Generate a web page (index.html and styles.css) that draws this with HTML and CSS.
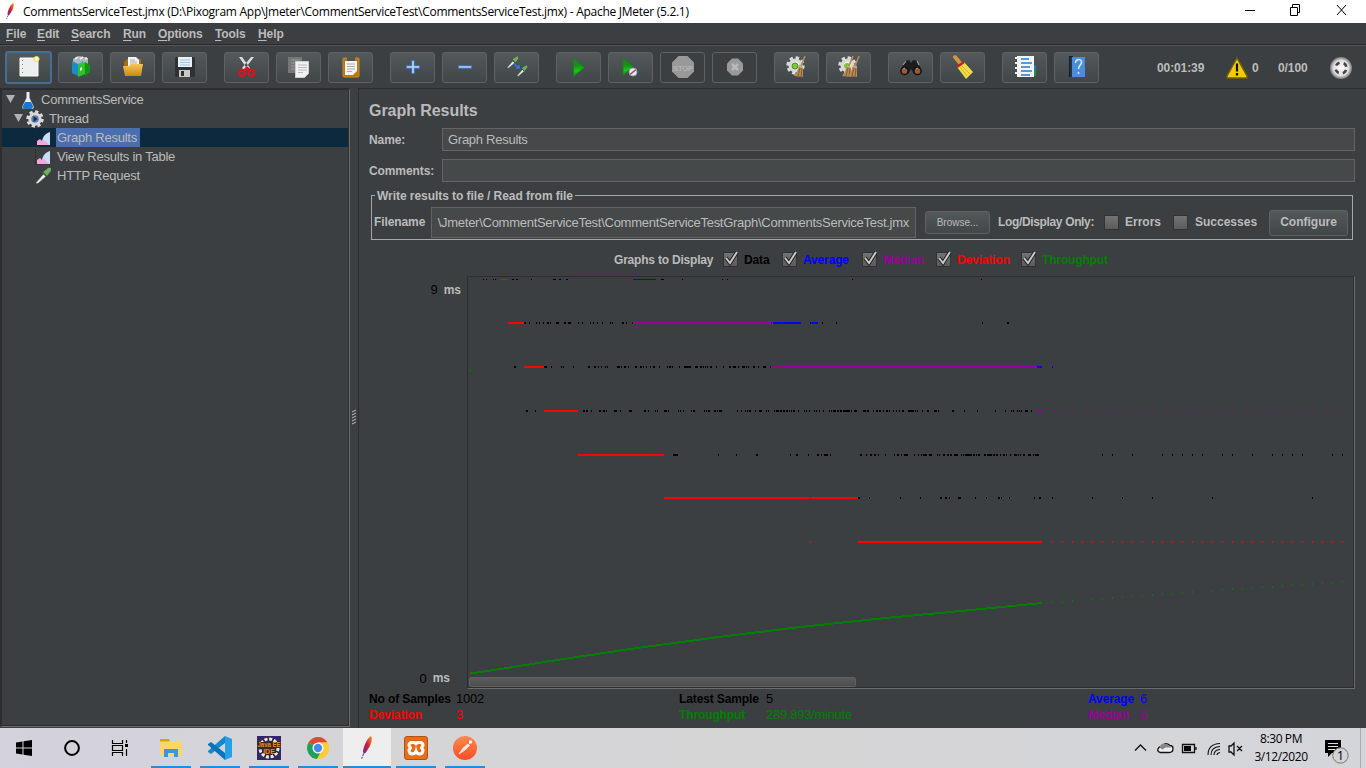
FILE: index.html
```html
<!DOCTYPE html>
<html lang="en">
<head>
<meta charset="utf-8">
<title>Apache JMeter (5.2.1)</title>
<link rel="stylesheet" href="styles.css">
</head>
<body>
<svg class="defs" width="0" height="0">
  <defs>
    <linearGradient id="feather" x1="0" y1="1" x2="1" y2="0"><stop offset="0" stop-color="#6d2a86"/><stop offset=".5" stop-color="#cf1f3d"/><stop offset="1" stop-color="#f79a1e"/></linearGradient>
    <linearGradient id="green" x1="0" y1="0" x2="0" y2="1"><stop offset="0" stop-color="#128a18"/><stop offset=".4" stop-color="#159218"/><stop offset=".7" stop-color="#19c615"/><stop offset="1" stop-color="#0a8a0c"/></linearGradient>
    <linearGradient id="folder" x1="0" y1="0" x2="0" y2="1"><stop offset="0" stop-color="#f5c85c"/><stop offset="1" stop-color="#c98a10"/></linearGradient>
    <linearGradient id="postman" x1="0" y1="0" x2="0" y2="1"><stop offset="0" stop-color="#ff8a50"/><stop offset="1" stop-color="#ff4c24"/></linearGradient>
    <radialGradient id="ball"><stop offset="0" stop-color="#fff"/><stop offset=".7" stop-color="#ddd"/><stop offset="1" stop-color="#777"/></radialGradient>
    <symbol id="quill" viewBox="0 0 12 24"><path d="M10.500 0c2 3 0 9-3 13l-2.500 4-2 1-.5-3C3.500 9 7 2 10.500 0z" fill="url(#feather)"/><path d="M3 18l-2 5" stroke="#6d4b92" stroke-width="1.200" stroke-dasharray="2 1"/></symbol>
    <symbol id="gear" viewBox="0 0 18 18"><circle cx="9" cy="9" r="7.400" fill="none" stroke="#ddd" stroke-width="2.600" stroke-dasharray="3.200 2.600"/><circle cx="9" cy="9" r="5.200" fill="#eee" stroke="#d8d8d8" stroke-width="3"/></symbol>
    <symbol id="broom" viewBox="0 0 12 22"><path d="M11 0L7 10" stroke="#b08a5a" stroke-width="1.600"/><path d="M5 9l4 2 0 10-9-1c3-3 4-7 5-11z" fill="#b78a58"/><path d="M6 12l-2 8M8 12l-1 9" stroke="#76502c" stroke-width=".8"/><path d="M5 10l4 2" stroke="#e4bb85"/></symbol>
    <symbol id="pipette" viewBox="0 0 18 18"><path d="M2 16l8-9 2 2L4 16z" fill="#f4f8f4" stroke="#b4bcb5" stroke-width=".7"/><path d="M9 5l4-3c2-2 4-1 4 0s0 2-1 3l-3 4z" fill="#6fb05e"/><path d="M8.500 5.500l4 4" stroke="#34602e" stroke-width="1.500"/></symbol>
    <symbol id="graph" viewBox="0 0 17 17"><path d="M1.500 1v15h15" fill="none" stroke="#252729" stroke-dasharray="1.500 1"/><path d="M8 12c1-5 4-8 8-9v13h-4z" fill="#c9ddf6"/><path d="M3 16v-4l3-2 2 2 2-1 3 3 2 2z" fill="#f3a6dc"/></symbol>
  </defs>
</svg>

<header class="titlebar">
  <svg class="title-logo" width="12" height="18"><use href="#quill" width="10" height="17"/></svg>
  <span class="title-text">CommentsServiceTest.jmx (D:\Pixogram App\Jmeter\CommentServiceTest\CommentsServiceTest.jmx) - Apache JMeter (5.2.1)</span>
  <svg class="winbuttons" width="102" height="16" fill="none" stroke="#000"><path d="M0 8.500h10M45.500 5.500h7v8h-7zM47.500 5v-2.500h7v8h-2M92 3l9 10M101 3l-9 10"/></svg>
</header>

<nav class="menubar">
  <span class="m1"><u>F</u>ile</span><span class="m2"><u>E</u>dit</span><span class="m3"><u>S</u>earch</span><span class="m4"><u>R</u>un</span><span class="m5"><u>O</u>ptions</span><span class="m6"><u>T</u>ools</span><span class="m7"><u>H</u>elp</span>
</nav>

<div class="toolbar">
  <div class="group">
    <button class="tb focus"><svg width="24" height="24"><path d="M3 3h18v18H3z" fill="#eee" stroke="#fafafa"/><path d="M5.500 5v15" stroke="#888" stroke-dasharray="1 3"/><circle cx="19.500" cy="4" r="2.600" fill="#fff9c8" stroke="#e6d95a"/></svg></button>
    <button class="tb"><svg width="24" height="24"><path d="M4 4l6-3 9 2v8H4z" fill="#aeb7b7"/><path d="M6 4l3-2M11 4l3-2M16 4l2-1" stroke="#e8eeee" stroke-width="2"/><path d="M3 6l6 3v12l-6-3z" fill="#1b8cc7"/><path d="M9 9l5-3v12l-5 3z" fill="#2fb5df"/><path d="M9 10l7-3v12l-7 3z" fill="#2fc32b"/><path d="M16 7l5 3v7l-5 4z" fill="#149412"/><path d="M11 13l2-1v3l-2 1z" fill="#eafbe8"/></svg></button>
    <button class="tb"><svg width="24" height="24"><path d="M3 7l3-3h14v12H3z" fill="#a87108"/><path d="M7 2h8l3 3v10H7z" fill="#f4f4f4"/><path d="M9 5h5M9 7h7M9 9h7" stroke="#aaa"/><path d="M2 11h6l2-2h12l-2 12H4z" fill="url(#folder)"/></svg></button>
    <button class="tb"><svg width="24" height="24"><rect x="2" y="2" width="20" height="20" rx="1.500" fill="#2f3133"/><path d="M5 2h14v10H5z" fill="#e9f1f7"/><path d="M7 5h10M7 7.500h10M7 10h10" stroke="#9bc3df"/><path d="M6 15h11v7H6z" fill="#c9c9c9"/><path d="M8 16h3v5H8z" fill="#303030"/></svg></button>
  </div>
  <div class="group">
    <button class="tb"><svg width="24" height="24"><path d="M4 2l9 13 2-2L7 2zM19 2L9 15l-2-2 9-11z" fill="#ddd"/><ellipse cx="7" cy="18" rx="2.800" ry="3" fill="none" stroke="#d5151d" stroke-width="2.600"/><ellipse cx="16.500" cy="18" rx="2.800" ry="3" fill="none" stroke="#d5151d" stroke-width="2.600"/><path d="M9 15.500l3-2.500 3 2.500" stroke="#d5151d" stroke-width="2.500" fill="none"/></svg></button>
    <button class="tb"><svg width="24" height="24"><path d="M1 2h14v16H1z" fill="#777"/><path d="M4 5h9M4 8h5M4 11h5M4 14h5" stroke="#999"/><path d="M8.500 6.500h13v12l-4 4h-9z" fill="#f1f1f1" stroke="#ccc"/><path d="M11 10h9M11 12.500h9M11 15h9M11 17.500h5" stroke="#bbb"/></svg></button>
    <button class="tb"><svg width="24" height="24"><rect x="4" y="3" width="16" height="19" rx="1" fill="#b97815" stroke="#c98a2c"/><path d="M6 6h12v10l-4 4H6z" fill="#f4f4f4"/><path d="M8 2h8v4H8z" fill="#555"/><path d="M8 9h8M8 11.500h8M8 14h8M8 16.500h5" stroke="#aaa"/></svg></button>
  </div>
  <div class="group">
    <button class="tb"><svg width="24" height="24"><path d="M12 5v14M5 12h14" stroke="#4479c6" stroke-width="3.400"/><path d="M12 6v12M6 12h12" stroke="#b9d7fa" stroke-width="1.600"/></svg></button>
    <button class="tb"><svg width="24" height="24"><path d="M5 12h14" stroke="#4479c6" stroke-width="3.400"/><path d="M6 12h12" stroke="#a8ccf8" stroke-width="1.600"/></svg></button>
    <button class="tb"><svg width="24" height="24"><use href="#pipette" x="1" y="1" width="13" height="13"/><use href="#pipette" x="11" y="10" width="12" height="12"/><path d="M9 9l5 4m0-3v3h-3" stroke="#2c7be0" stroke-width="1.500" fill="none"/></svg></button>
  </div>
  <div class="group">
    <button class="tb"><svg width="24" height="24"><path d="M6.500 3.500l11 9-11 9z" fill="url(#green)" stroke="#16831a"/></svg></button>
    <button class="tb"><svg width="24" height="24"><path d="M4 3.500l10 8-10 9z" fill="url(#green)" stroke="#16831a"/><circle cx="14" cy="17" r="4" fill="#dfeaf5" stroke="#8dabd0"/><path d="M11 19.500l6-5" stroke="#d33b30" stroke-width="1.600"/></svg></button>
    <button class="tb off"><svg width="24" height="24"><path d="M7.500 1h9L23 7.500v9L16.500 23h-9L1 16.500v-9z" fill="#999"/><text x="12" y="15.500" text-anchor="middle" textLength="20" lengthAdjust="spacingAndGlyphs" class="stop-label">STOP</text></svg></button>
    <button class="tb off"><svg width="24" height="24"><path d="M9 3.500h6l5 5v7l-5 5H9l-5-5v-7z" fill="#999"/><path d="M9 9l6 6M15 9l-6 6" stroke="#b9b9b9" stroke-width="2.500"/></svg></button>
  </div>
  <div class="group">
    <button class="tb"><svg width="24" height="24"><use href="#gear" x="1" y="1" width="19" height="19"/><circle cx="10" cy="11" r="3" fill="#7cc83c" stroke="#4b9120"/><use href="#broom" x="9" y="1" width="12" height="22"/></svg></button>
    <button class="tb"><svg width="24" height="24"><use href="#gear" x="1" y="1" width="19" height="19"/><circle cx="10" cy="11" r="3" fill="#7cc83c"/><use href="#broom" x="5" y="1" width="12" height="22"/><use href="#broom" x="11" y="1" width="12" height="22"/></svg></button>
  </div>
  <div class="group">
    <button class="tb"><svg width="24" height="24"><path d="M2 14l4-8 4-1 2 3 2-3 4 1 4 8-3 5h-4l-3-5-3 5H4z" fill="#1d1d1d"/><circle cx="5.500" cy="16" r="3.600" fill="#a0563a" stroke="#111" stroke-width="1.500"/><circle cx="18.500" cy="16" r="3.600" fill="#a0563a" stroke="#111" stroke-width="1.500"/><path d="M4 10l3-4M18 6l2 4M4 14l2-1M17 14l2-1" stroke="#999" stroke-width="1.200"/></svg></button>
    <button class="tb"><svg width="24" height="24"><path d="M4 2l5 6" stroke="#cf9545" stroke-width="4" stroke-linecap="round"/><path d="M6 12l7-5 9 10-7 7z" fill="#f3dc46"/><path d="M9 12l7 9M11 11l8 8" stroke="#cdaa22" stroke-width=".8"/><path d="M6 12l7-5" stroke="#c92020" stroke-width="2.500"/></svg></button>
  </div>
  <div class="group">
    <button class="tb"><svg width="24" height="24"><path d="M20 10h3v5h-3z" fill="#326ed0"/><path d="M20 15h3v6h-3z" fill="#169b2f"/><path d="M4 1h17v21H4z" fill="#f6f6f6"/><path d="M8 4h8M8 8h11M8 12h9M8 16h11M8 20h9" stroke="#207be0" stroke-width="1.500"/><path d="M2 3h4M2 8h4M2 13h4M2 18h4" stroke="#eee" stroke-width="2"/></svg></button>
    <button class="tb"><svg width="24" height="24"><path d="M4 1h4v21H4z" fill="#161c24"/><path d="M7 2h13v20H7z" fill="#4c8cdc"/><path d="M6 2v20" stroke="#20344f" stroke-width="2"/><path d="M10.500 8c0-5 7-4 6 0-.5 2-3 2.500-3 6M13.500 17v2" fill="none" stroke="#dcebfc" stroke-width="1.500"/></svg></button>
  </div>
  <div class="status"><span class="timer">00:01:39</span><svg width="24" height="24"><path d="M12 2l10 18v2H2v-2z" fill="#f2c90b" stroke="#70600b" stroke-width="1.500"/><path d="M12 7.500v8M12 17v2.500" stroke="#111" stroke-width="2.200"/></svg><span class="errs">0</span><span class="threads">0/100</span><svg width="24" height="24"><circle cx="12" cy="12" r="11" fill="url(#ball)"/><circle cx="12" cy="12" r="5.500" fill="none" stroke="#444" stroke-width="2.600" stroke-dasharray="4.300 4.340" stroke-dashoffset="-2.170"/></svg></div>
</div>

<main class="workspace">
  <aside class="tree">
    <div class="node n0"><svg width="10" height="9"><path d="M0 0h9L4.500 8z" fill="#afb1b3"/></svg><svg width="15" height="18"><path d="M5.500 1h3v6l4 8q1 3-2 3H3.500q-3 0-2-3l4-8z" fill="#e8eff5"/><path d="M4 11h6l2 4q0 3-2 3H4q-3 0-2-3z" fill="#1976d2"/></svg><span>CommentsService</span></div>
    <div class="node n1"><svg width="10" height="9"><path d="M0 0h9L4.500 8z" fill="#afb1b3"/></svg><svg width="18" height="18"><use href="#gear" width="18" height="18"/><circle cx="9" cy="9" r="3.800" fill="#5e80aa"/><path d="M7.500 6l4 3-4 3z" fill="#142c50"/></svg><span>Thread</span></div>
    <div class="node n2 selected"><svg width="18" height="17"><use href="#graph" x="-1" width="17" height="17"/></svg><span class="picked">Graph Results</span></div>
    <div class="node n2"><svg width="18" height="17"><use href="#graph" x="-1" width="17" height="17"/></svg><span>View Results in Table</span></div>
    <div class="node n2"><svg width="18" height="18"><use href="#pipette" x="-1" width="18" height="18"/></svg><span>HTTP Request</span></div>
  </aside>
  <div class="splitter"><svg width="6" height="14"><path d="M1 2l4-2M1 5l4-2M1 8l4-2M1 11l4-2M1 14l4-2" stroke="#bbb"/></svg></div>
  <section class="panel">
    <h1>Graph Results</h1>
    <div class="field f-name"><label>Name:</label><div class="input">Graph Results</div></div>
    <div class="field f-comments"><label>Comments:</label><div class="input"></div></div>
    <fieldset class="filebox">
      <legend>Write results to file / Read from file</legend>
      <label class="fn">Filename</label>
      <div class="input path"><span>\Jmeter\CommentServiceTest\CommentServiceTestGraph\CommentsServiceTest.jmx</span></div>
      <button class="btn browse">Browse...</button>
      <span class="logonly">Log/Display Only:</span>
      <i class="check"></i><span class="errors">Errors</span>
      <i class="check"></i><span class="succ">Successes</span>
      <button class="btn configure">Configure</button>
    </fieldset>
    <div class="legendrow">
      <span class="lr-title">Graphs to Display</span>
      <span class="opt o1"><i class="check on"><svg width="16" height="17"><path d="M3 8l4 5 7-11" stroke="#222" stroke-width="4" fill="none"/><path d="M3 8l4 5 7-11" stroke="#c8c8c8" stroke-width="2" fill="none"/></svg></i>Data</span>
      <span class="opt o2 blue"><i class="check on"><svg width="16" height="17"><path d="M3 8l4 5 7-11" stroke="#222" stroke-width="4" fill="none"/><path d="M3 8l4 5 7-11" stroke="#c8c8c8" stroke-width="2" fill="none"/></svg></i>Average</span>
      <span class="opt o3 purple"><i class="check on"><svg width="16" height="17"><path d="M3 8l4 5 7-11" stroke="#222" stroke-width="4" fill="none"/><path d="M3 8l4 5 7-11" stroke="#c8c8c8" stroke-width="2" fill="none"/></svg></i>Median</span>
      <span class="opt o4 red"><i class="check on"><svg width="16" height="17"><path d="M3 8l4 5 7-11" stroke="#222" stroke-width="4" fill="none"/><path d="M3 8l4 5 7-11" stroke="#c8c8c8" stroke-width="2" fill="none"/></svg></i>Deviation</span>
      <span class="opt o5 green"><i class="check on"><svg width="16" height="17"><path d="M3 8l4 5 7-11" stroke="#222" stroke-width="4" fill="none"/><path d="M3 8l4 5 7-11" stroke="#c8c8c8" stroke-width="2" fill="none"/></svg></i>Throughput</span>
    </div>
    <div class="chartrow">
      <div class="axis"><div><em>9</em><b>ms</b></div><div><em>0</em><b>ms</b></div></div>
      <div class="chart"><svg id="plot" width="884" height="399" viewBox="469 278 884 399" shape-rendering="crispEdges"></svg><div class="scrollbar"></div></div>
    </div>
    <div class="stats">
      <div class="stat"><b>No of Samples</b><span>1002</span><b class="red">Deviation</b><span class="red">3</span></div>
      <div class="stat s2"><b>Latest Sample</b><span>5</span><b class="green">Throughput</b><span class="green">289.893/minute</span></div>
      <div class="stat s3"><b class="blue">Average</b><span class="blue">6</span><b class="purple">Median</b><span class="purple">6</span></div>
    </div>
  </section>
</main>

<footer class="taskbar">
  <div class="sys"><svg width="16" height="16"><path d="M0 2.500l6.500-1v6H0zM7.500 1.300L16 0v7.500H7.500zM0 8.500h6.500v6L0 13.500zM7.500 8.500H16V16l-8.500-1.200z" fill="#000"/></svg></div>
  <div class="sys"><svg width="16" height="16"><circle cx="8" cy="8" r="6.900" fill="none" stroke="#000" stroke-width="2"/></svg></div>
  <div class="sys"><svg width="16" height="16"><path d="M.5 0v3.500h10V0M.5 5.500h10v5H.5zM.5 16v-3.500h10V16M14.500 0v3M14.500 9v7" fill="none" stroke="#000" stroke-width="1.200"/><path d="M13 4h3v3h-3z"/></svg></div>
  <div class="app"><svg width="24" height="24"><path d="M1 3h9l1 2h12v15H1z" fill="#fcd667"/><path d="M1 3h9l1 2.500H1z" fill="#dfa000"/><path d="M5 13h14v8h-4v-4H9v4H5z" fill="#3d95dd"/></svg></div>
  <div class="app"><svg width="24" height="24"><path d="M17 0l7 3v18l-7 3V0z" fill="#269fe6"/><path d="M17 7L3 18l-3-2v-1L17 0z" fill="#1387cf"/><path d="M17 17L3 6 0 8v1l17 15z" fill="#0d73b9"/></svg></div>
  <div class="app"><svg width="24" height="24"><path d="M0 0h24v24H0z" fill="#36275f"/><circle cx="12" cy="12" r="9" fill="#302b29" stroke="#e9e9e9" stroke-width="3" stroke-dasharray="3 1.700"/><path d="M0 6h24v6H0zM5 12h14v5H5z" fill="#352b24"/><text class="ide" x="12" y="11" textLength="23" lengthAdjust="spacingAndGlyphs" text-anchor="middle">Java EE</text><text class="ide" x="12" y="17.500" text-anchor="middle">IDE</text></svg></div>
  <div class="app"><svg width="24" height="24"><circle cx="12" cy="12" r="11" fill="#fccd36"/><path d="M12 12L2.500 6.500A11 11 0 0 1 21.500 6.500H12z" fill="#dc4a3b"/><path d="M12 12L2.500 6.500A11 11 0 0 0 11 23l5-8z" fill="#1da15e"/><path d="M12 12h5l-6 11a11 11 0 0 0 10.500-16.500H12z" fill="#fccd36"/><circle cx="12" cy="12" r="5.500" fill="#fff"/><circle cx="12" cy="12" r="4.200" fill="#4889ef"/></svg></div>
  <div class="app active"><svg width="14" height="24"><use href="#quill" width="13" height="24"/></svg></div>
  <div class="app"><svg width="24" height="24"><rect x=".5" y=".5" width="23" height="23" rx="2.500" fill="#ea6c17" stroke="#ab541c"/><path d="M8 6.500h2.500L12 8l1.500-1.500H16q3 0 3 3L17.500 12l1.500 2q0 4-3.500 4-2.500 0-3.500-3-1 3-3.500 3Q5 18 5 14l1.500-2L5 9.500q0-3 3-3z" fill="none" stroke="#fff" stroke-width="3"/></svg></div>
  <div class="app"><svg width="24" height="24"><circle cx="12" cy="12" r="12" fill="url(#postman)"/><path d="M6 18l4-6 5-4 1.500 1.500L12 14zM15 9l2-2" fill="#ffe9dd" stroke="#ffe9dd" stroke-width=".8"/><circle cx="17.500" cy="6" r="1.700" fill="#fff"/></svg></div>
  <div class="tray">
    <svg width="112" height="18" fill="none" stroke="#111" stroke-width="1.300"><path d="M1 11.500l5.500-5.500 5.500 5.500"/><path d="M26 13.500q-4-2-1-5 1-1 3-1 3-5 8-1 3 0 3 3 0 4-4 4z" fill="#eee"/><path d="M25.500 8.500q2-6 8-3l4 3-6 0-3 2z" fill="#888" stroke="none"/><path d="M48.500 5.500h12v8h-12zM62 8v3"/><path d="M50 7h7v5h-7z" fill="#000" stroke="none"/><path d="M74 16Q74 5 86 4.500M77 16q0-8 9-8.500M80 16q0-5 6-5.500M83 16q0-2 3-2.500" stroke-width="1.100"/><path d="M95 7h2l3-3v12l-3-3h-2zM103 7l5 5M108 7l-5 5"/></svg>
    <div class="clock"><div>8:30 PM</div><div>3/12/2020</div></div>
    <div class="notify"><svg width="26" height="28"><path d="M1 2h16v13H8l-4 4v-4H1z" fill="#000"/><path d="M4 5.500h10M4 8.500h10M4 11.500h7" stroke="#ddd"/><circle cx="16.500" cy="17.500" r="7.700" fill="#d3d3d6" stroke="#777"/><text class="count" x="16.500" y="22" text-anchor="middle">1</text></svg></div>
  </div>
</footer>
<script src="chart.js"></script>
</body>
</html>
```
FILE: styles.css
```css
* { box-sizing: border-box; }
body { margin: 0; width: 1366px; height: 768px; overflow: hidden; background: #3c3f41; color: #bbb; font: 13px/15px "Liberation Sans", Arial, sans-serif; display: flex; flex-direction: column; }
svg { display: block; flex: none; overflow: visible; }
.defs { position: absolute; }
button { font: inherit; color: inherit; padding: 0; margin: 0; }
.red { color: #f00; }
.green { color: #008000; }
.blue { color: #00f; }
.purple { color: #990099; }

.titlebar { height: 23px; flex: none; background: #fff; color: #000; display: flex; align-items: center; font: 12px/16px "Open Sans", "Noto Sans", sans-serif; }
.title-logo { margin-left: 5px; }
.title-text { margin-left: 6px; white-space: nowrap; letter-spacing: -.275px; }
.winbuttons { margin: -3px 19px 0 auto; }

.menubar { height: 23px; flex: none; display: flex; padding: 4px 0 0 6px; border-bottom: 1px solid #555250; box-shadow: inset 0 -1px #282a2b; font-weight: bold; font-size: 12px; line-height: 14px; }
.menubar span { white-space: nowrap; letter-spacing: -.1px; }
.m1 { width: 31px; } .m2 { width: 34px; } .m3 { width: 52px; } .m4 { width: 35px; } .m5 { width: 57px; } .m6 { width: 43px; }
.menubar u { text-underline-offset: 2px; }

.toolbar { height: 42px; flex: none; display: flex; align-items: center; gap: 17px; padding: 1px 13px 0 5px; }
.group { display: flex; gap: 7px; }
.tb { width: 45px; height: 31px; border: 1px solid #5e6263; border-radius: 3px; background: linear-gradient(#53585a, #414648); display: flex; align-items: center; justify-content: center; padding-bottom: 1px; }
.tb.focus { width: 47px; height: 33px; margin: -1px -1px -1px 0; border: 2px solid #466d94; }
.tb.off { background: #3c3f41; }
.stop-label { font: bold 8px "Liberation Sans", sans-serif; fill: #b4b4b4; }
.status { display: flex; align-items: center; margin-left: auto; font-weight: bold; font-size: 12px; letter-spacing: -.1px; }
.timer { width: 68px; } .errs { width: 26px; margin-left: 3px; } .threads { width: 51px; }
.timer, .errs, .threads { padding-top: 1px; }

.workspace { height: 640px; flex: none; display: flex; }
.tree { width: 350px; border-top: 2px solid #2b2d2e; border-left: 2px solid #2b2d2e; border-right: 1px solid #6a6d6f; border-bottom: 1px solid #6a6d6f; margin-bottom: 1px; box-shadow: inset -1px -1px #2b2d2e; flex: none; }
.node { height: 19px; margin-right: 1px; display: flex; align-items: center; white-space: nowrap; }
.n0 { padding-left: 4px; } .n0 svg + svg { margin-left: 5px; } .n0 span { margin-left: 5px; }
.n1 { padding-left: 12px; } .n1 svg + svg { margin-left: 2px; } .n1 span { margin-left: 5px; }
.n2 { padding-left: 33px; } .n2 span { margin-left: 3px; padding: 0 3px 0 1px; line-height: 19px; }
.node.selected { background: #0d293e; }
.node span { letter-spacing: -.24px; }
.picked { background: #4b6eaf; }
.splitter { width: 8px; display: flex; align-items: center; justify-content: center; padding-top: 17px; }
.panel { width: 1008px; border-left: 1px solid #2b2d2e; border-top: 1px solid #2b2d2e; display: flex; flex-direction: column; }
.panel h1 { font-size: 16px; line-height: 20px; margin: 12px 0 7px 10px; letter-spacing: -.05px; }
.field { display: flex; align-items: center; height: 23px; margin: 0 11px 8px 10px; }
.f-comments { margin-bottom: 6px; }
.field label { width: 73px; padding-top: 1px; font-weight: bold; font-size: 12px; letter-spacing: -.1px; }
.input { flex: 1; height: 23px; border: 1px solid #646464; background: #45494a; padding: 3px 5px; white-space: nowrap; letter-spacing: -.27px; }
.filebox { margin: 0 13px 0 12px; height: 52px; padding: 3px 4px 0 2px; border: 1px solid #a5a7a8; display: flex; align-items: center; font-weight: bold; font-size: 12px; min-width: 0; }
.filebox > :not(legend) { position: relative; top: 1px; }
.filebox legend { margin-left: 1px; padding: 2px 2px 0; line-height: 13px; letter-spacing: -.05px; }
.fn { width: 57px; letter-spacing: -.1px; }
.filebox .path { flex: none; width: 485px; height: 31px; font-size: 13px; font-weight: normal; display: flex; justify-content: flex-end; padding: 7px 6px; }
.btn { border: 1px solid #5e6263; border-radius: 3px; background: linear-gradient(#53585a, #414648); }
.browse { width: 65px; height: 23px; margin: 0 8px 0 9px; font-size: 10px; font-weight: normal; }
.configure { width: 79px; height: 26px; margin-left: auto; font-weight: bold; }
.check { display: block; width: 15px; height: 15px; flex: none; background: linear-gradient(#737373, #5c5c5c); border: 1px solid #303234; }
.logonly { width: 106px; white-space: nowrap; letter-spacing: -.35px; }
.errors { width: 48px; margin-left: 6px; }
.succ { margin-left: 7px; }
.legendrow { display: flex; align-items: center; margin: 12px 0 8px 255px; height: 16px; font-size: 12px; font-weight: bold; white-space: nowrap; letter-spacing: -.15px; }
.lr-title { width: 109px; letter-spacing: -.2px; }
.opt { display: flex; align-items: center; gap: 6px; }
.o1 { color: #000; width: 59px; } .o2 { width: 80px; } .o3 { width: 74px; } .o4 { width: 85px; }
.check.on { margin-top: -2px; }
.on svg { margin: -3px 0 0 -1px; }
.chartrow { display: flex; height: 413px; margin-right: 11px; }
.axis { width: 108px; display: flex; flex-direction: column; justify-content: space-between; padding: 6px 6px 3px 0; }
.axis div { display: flex; justify-content: flex-end; }
.axis em { font-style: normal; color: #000; margin-right: 6px; }
.axis b { font-size: 12px; padding-top: 1px; }
.axis div + div { padding-right: 11px; }
.axis div + div b { padding-top: 0; }
.chart { flex: 1; border: 1px solid #2b2d2e; border-right-color: #6a6d6f; border-bottom-color: #6a6d6f; box-shadow: inset -1px -1px #2b2d2e; padding: 1px 0 0 1px; }
.scrollbar { width: 387px; height: 10px; background: linear-gradient(#5b5b5b, #4e4e4e); border: 1px solid #606060; border-radius: 2px; }
.stats { display: flex; padding: 2px 0 0 10px; line-height: 16px; }
.stat { display: grid; grid-template-columns: 87px 223px; color: #000; height: 32px; }
.stat b { font-size: 12px; white-space: nowrap; letter-spacing: -.12px; }
.stat span { letter-spacing: -.27px; }
.s2 { grid-template-columns: 87px 322px; }
.s3 { grid-template-columns: 52px 40px; }

.taskbar { height: 40px; flex: none; display: flex; background: linear-gradient(90deg, #d3d2dd, #d5d5d7 30%, #d5d5d6 60%, #d4d5db); }
.sys { width: 48px; display: flex; align-items: center; justify-content: center; }
.app { width: 40px; margin-left: 9px; border-bottom: 2px solid #278cd2; display: flex; align-items: center; justify-content: center; padding-top: 2px; }
.sys + .app { margin-left: 7px; }
.app.active { width: 48px; margin: 0 -4px 0 5px; background: #eeeeef; }
.ide { font: bold 7px "Liberation Sans", sans-serif; fill: #f18724; }
.tray { margin-left: auto; display: flex; align-items: center; color: #000; }
.clock { font: 12px/18px "Open Sans", "Noto Sans", sans-serif; letter-spacing: -.4px; text-align: center; width: 68px; margin: 0 10px 0 1px; }
.notify { width: 36px; height: 40px; padding-top: 10px; border-right: 1px solid #aaaab2; margin-right: 5px; }
.notify svg { margin-left: -1px; }
.count { font: 13px "Open Sans", sans-serif; }
.active + .app { margin-left: 9px; }
```
FILE: chart.js
```js
// Each run is "x" or "x:width"; rows are two pixels tall.
const NS = "http://www.w3.org/2000/svg";
const plot = document.getElementById("plot");
const colors = { k: "#000", r: "#f00", p: "#990099", b: "#00f", g: "#008000" };

function draw(color, y, height, runs) {
  const d = runs.trim().split(/\s+/).map(run => {
    const [x, w = 1] = run.split(":").map(Number);
    return `M${x} ${y}h${w}v${height}h-${w}z`;
  }).join("");
  const path = document.createElementNS(NS, "path");
  path.setAttribute("d", d);
  path.setAttribute("fill", colors[color]);
  plot.append(path);
}

const every10 = Array.from({ length: 30 }, (_, i) => 1052 + i * 10).join(" ");

draw("k", 279, 1, "483 486 493 495 512:2 516:2 531 553:3 559:2 566:2 661:3 682 722 727 852 981");
draw("r", 279, 1, "500:8");
draw("p", 279, 1, "569:64");
draw("b", 279, 1, "633:23");

draw("k", 322, 2, "524:2 529 536 539 543 547:2 550 556:3 564:2 568:3 578 582 590 593 597 602 610 612 622:2 626 632 810 822 836 982 1007:2");
draw("r", 322, 2, "508:16");
draw("p", 322, 2, "633:140");
draw("b", 322, 2, "771 773:28 811:7");

draw("k", 366, 2, "514:2 544:3 551 561 563 573 588:2 594:2 598 601 605 607 617:3 621 624:2 628 635:2 640:2 643 646 650 653:2 659 667 669:2 672 679 684:7 695:3 700:2 703 705 707 710:2 716 723 729:2 733:3 738 742:3 746 748 753:2 758 763:3 770");
draw("r", 366, 2, "524:20");
draw("p", 366, 2, "771 773:264");
draw("b", 366, 2, "1037:5 1052");

draw("k", 410, 2, "526:2 535 583:2 586:2 591 599:2 603:2 606 614:3 620 629:3 644:2 648 655 657 664:3 668 678 680 683 691 693:2 704 706 708:2 714:2 717 719:3 737 741 745 747 749:2 755 759 760:2 766 768 774 776:3 780:2 783:2 786:2 789 791 793:2 798 804 806 809 814 816 819 823 829 831 833:3 837:2 840:2 843:7 851 854:3 863:3 867:2 873 876:2 879:2 883 886:2 889 893 896 899 902:2 908:6 915 917 922 927:2 934:3 938 952:2 964 977 995 1005 1011 1013 1017 1019 1021 1025:3 1031");
draw("r", 410, 2, "544:34");
draw("p", 410, 2, "1037:5 " + every10);

draw("k", 454, 2, "673:5 718 736 756:2 790 796:2 808 817:2 821 824:4 830 860:2 866 870:2 874:2 878 885 894 897:2 901 904:4 914 918 921 923:4 929:3 937 939 943:2 947:2 950:2 954:4 961 963 965:7 973:2 976 978:2 984:2 987:5 993:2 996:2 1000 1003:2 1006 1010 1014:3 1018 1020 1023:2 1028:3 1033 1035:4 1102 1112 1132 1162 1172 1182 1192 1202 1222 1232 1252 1272 1282 1292 1302 1332 1342");
draw("r", 454, 2, "578:86");

draw("k", 497, 2, "858:2 869 900 920 940:2 945:2 949 958:3 975 986 998:2 1001 1009 1034 1039:2 1052 1092 1122 1152 1212 1312");
draw("r", 497, 2, "664:146 811:47");

draw("r", 541, 2, "810 858:184 " + every10);

// Throughput: one column per sample, then every tenth sample.
const curve = [[470, 672.5], [500, 668], [550, 660], [633, 647.5], [722, 635.5], [800, 626], [880, 617.5], [960, 610], [1042, 602], [1152, 594], [1252, 587], [1342, 581]];
function throughput(x) {
  const i = Math.max(1, curve.findIndex(p => p[0] >= x));
  const [x0, y0] = curve[i - 1], [x1, y1] = curve[i];
  return Math.round(y0 + (y1 - y0) * (x - x0) / (x1 - x0));
}
draw("g", 369, 2, "470");
for (let x = 470; x < 1042; x++) draw("g", throughput(x), 2, String(x));
for (let x = 1052; x <= 1342; x += 10) draw("g", throughput(x), 2, String(x));
draw("r", 672, 1, "470");
```
